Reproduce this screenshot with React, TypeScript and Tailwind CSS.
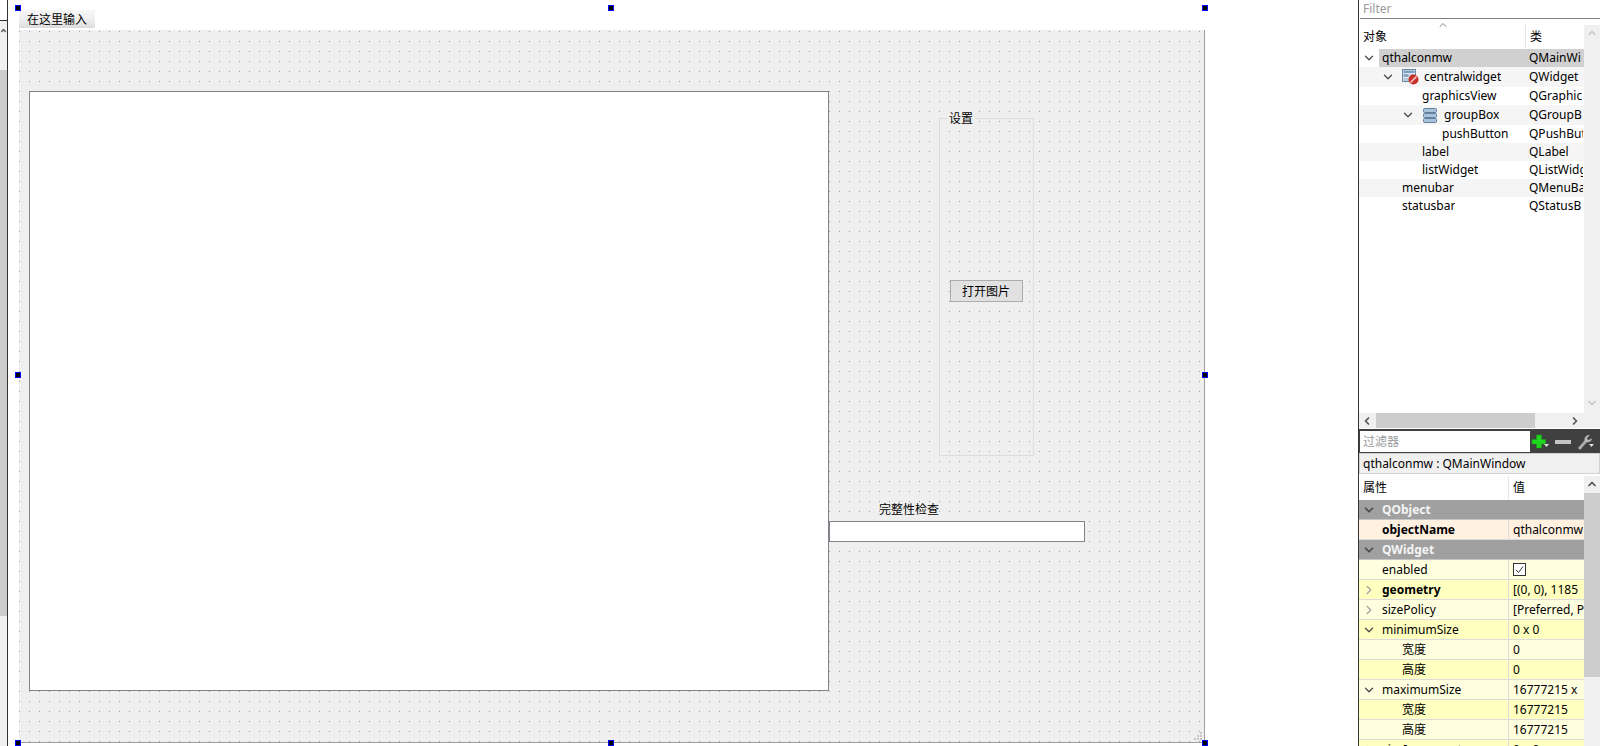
import { ChevronDown, ChevronLeft, ChevronRight, ChevronUp } from "lucide-react";

const cjk = "font-['Noto_Sans','Noto_Sans_CJK_SC',sans-serif]";

const treeRows = [
  { name: "qthalconmw", cls: "QMainWi", indent: 23, arrow: true, icon: "", h: "h-[18px]", bg: "bg-white", selected: true },
  { name: "centralwidget", cls: "QWidget", indent: 65, arrow: true, icon: "widget", h: "h-[20px]", bg: "bg-[#f5f5f5]" },
  { name: "graphicsView", cls: "QGraphic", indent: 63, arrow: false, icon: "", h: "h-[18px]", bg: "bg-white" },
  { name: "groupBox", cls: "QGroupB", indent: 85, arrow: true, icon: "group", h: "h-[20px]", bg: "bg-[#f5f5f5]" },
  { name: "pushButton", cls: "QPushBut", indent: 83, arrow: false, icon: "", h: "h-[18px]", bg: "bg-white" },
  { name: "label", cls: "QLabel", indent: 63, arrow: false, icon: "", h: "h-[18px]", bg: "bg-[#f5f5f5]" },
  { name: "listWidget", cls: "QListWidg", indent: 63, arrow: false, icon: "", h: "h-[18px]", bg: "bg-white" },
  { name: "menubar", cls: "QMenuBa", indent: 43, arrow: false, icon: "", h: "h-[18px]", bg: "bg-[#f5f5f5]" },
  { name: "statusbar", cls: "QStatusB", indent: 43, arrow: false, icon: "", h: "h-[18px]", bg: "bg-white" },
];

const L = "bg-[#ffffdf]";
const D = "bg-[#ffffbf]";

const propRows = [
  { kind: "section", name: "QObject" },
  { name: "objectName", value: "qthalconmw", bold: true, bg: "bg-[#fff0e0]", indent: 23 },
  { kind: "section", name: "QWidget" },
  { name: "enabled", check: true, value: "", bg: L, indent: 23 },
  { name: "geometry", value: "[(0, 0), 1185", bold: true, arrow: "right", bg: D, indent: 23 },
  { name: "sizePolicy", value: "[Preferred, P", arrow: "right", bg: L, indent: 23 },
  { name: "minimumSize", value: "0 x 0", arrow: "down", bg: D, indent: 23 },
  { name: "宽度", value: "0", bg: L, indent: 43 },
  { name: "高度", value: "0", bg: D, indent: 43 },
  { name: "maximumSize", value: "16777215 x", arrow: "down", bg: L, indent: 23 },
  { name: "宽度", value: "16777215", bg: D, indent: 43 },
  { name: "高度", value: "16777215", bg: L, indent: 43 },
  { name: "sizeIncrement", value: "0 x 0", arrow: "right", bg: D, indent: 23 },
];

function Handle({ className }: { className: string }) {
  return <div className={`absolute w-[4px] h-[4px] bg-black border border-[#0000ff] box-content ${className}`} />;
}

function WidgetIcon() {
  return (
    <svg width="17" height="16" viewBox="0 0 17 16" className="shrink-0">
      <rect x="0.5" y="0.5" width="13" height="12" fill="#dfe7ef" stroke="#6f8aa6" />
      <rect x="1.5" y="1.5" width="11" height="2.5" fill="#7f9fc0" />
      <rect x="1.5" y="5" width="5" height="3" fill="#8aa7c4" />
      <rect x="7.5" y="5" width="5" height="3" fill="#b6c8da" />
      <rect x="1.5" y="9" width="5" height="3" fill="#b6c8da" />
      <circle cx="11.5" cy="10.5" r="5" fill="#c8322b" />
      <path d="M8.5 13.5 L14.5 7.5" stroke="#f3d6d4" strokeWidth="1.4" />
    </svg>
  );
}

function GroupIcon() {
  return (
    <svg width="14" height="15" viewBox="0 0 14 15" className="shrink-0">
      <rect x="0.5" y="0.5" width="13" height="4" rx="1" fill="#a9c2dc" stroke="#64809e" />
      <rect x="0.5" y="5.5" width="13" height="4" rx="1" fill="#a9c2dc" stroke="#64809e" />
      <rect x="0.5" y="10.5" width="13" height="4" rx="1" fill="#a9c2dc" stroke="#64809e" />
    </svg>
  );
}

function FormArea() {
  return (
    <div className="relative w-[1186px] ml-[11px] mt-[10px]">
      <div className="h-[18px] w-[76px] flex items-center pl-[8px] pt-[1px] text-[12px] text-black bg-gradient-to-b from-[#f6f6f6] via-[#efefef] to-[#dcdcdc]">
        在这里输入
      </div>
      <div className="mt-[2px] h-[713px] border-b border-r border-[#a0a0a0] bg-[#efefef] bg-[conic-gradient(at_1px_1px,transparent_75%,#a0a0a0_0)] bg-[size:10px_10px] bg-[position:0_1px] relative">
        <div className="absolute left-[10px] top-[61px] w-[800px] h-[600px] bg-white border border-[#82838a]" />
        <div className="absolute left-[920px] top-[88px] w-[95px] h-[338px] border border-[#dcdcdc]">
          <span className="absolute left-[7px] top-[-8px] px-[2px] bg-[#efefef] leading-[16px]">设置</span>
          <div className="absolute left-[10px] top-[161px] w-[73px] h-[22px] bg-[#e1e1e1] border border-[#adadad] flex items-center justify-center pt-[2px] pr-[1px]">
            打开图片
          </div>
        </div>
        <div className="absolute left-[860px] top-[472px] leading-[16px]">完整性检查</div>
        <div className="absolute left-[810px] top-[491px] w-[256px] h-[21px] bg-white border border-[#82838a]" />
        <div className="absolute right-[2px] bottom-[2px] w-[8px] h-[8px] grid grid-cols-3 gap-px">
          <i /><i /><i className="bg-[#c8c8c8] h-[2px]" />
          <i /><i className="bg-[#c8c8c8] h-[2px]" /><i className="bg-[#c8c8c8] h-[2px]" />
          <i className="bg-[#c8c8c8] h-[2px]" /><i className="bg-[#c8c8c8] h-[2px]" /><i className="bg-[#c8c8c8] h-[2px]" />
        </div>
      </div>
      <Handle className="left-[-4px] top-[-5px]" />
      <Handle className="left-[589px] top-[-5px]" />
      <Handle className="right-[-3px] top-[-5px]" />
      <Handle className="left-[-4px] top-[362px]" />
      <Handle className="right-[-3px] top-[362px]" />
      <Handle className="left-[-4px] top-[730px]" />
      <Handle className="left-[589px] top-[730px]" />
      <Handle className="right-[-3px] top-[730px]" />
    </div>
  );
}

function ObjectTree() {
  return (
    <div className="h-[409px] flex bg-white relative">
      <div className="w-[225px] overflow-hidden">
        <div className="h-[24px] mt-[6px] flex relative">
          <ChevronUp size={12} className="absolute left-[78px] top-[-6px] text-[#808080]" />
          <div className="w-[167px] pl-[4px] border-r border-[#e5e5e5] leading-[24px]">对象</div>
          <div className="pl-[4px] leading-[24px]">类</div>
        </div>
        {treeRows.map((row) => (
          <div key={row.name} className={`flex items-center relative ${row.h} ${row.bg}`}>
            {row.selected && <div className="absolute left-[20px] right-0 inset-y-0 bg-[#d0d0d0]" />}
            {row.arrow && (
              <ChevronDown
                size={14}
                strokeWidth={2.5}
                className="absolute text-[#555]"
                style={{ left: row.icon === "group" ? 42 : row.icon === "widget" ? 22 : 3 }}
              />
            )}
            {row.icon === "widget" && <div className="absolute left-[43px]"><WidgetIcon /></div>}
            {row.icon === "group" && <div className="absolute left-[64px]"><GroupIcon /></div>}
            <span className="absolute truncate" style={{ left: row.indent }}>{row.name}</span>
            <span className="absolute left-[170px] w-[54px] overflow-hidden whitespace-nowrap">{row.cls}</span>
          </div>
        ))}
      </div>
      <div className="w-[16px] bg-[#f0f0f0] mt-[6px] flex flex-col justify-between items-center pt-[2px] pb-[19px] text-[#c8c8c8]">
        <ChevronUp size={12} strokeWidth={3.5} />
        <ChevronDown size={12} strokeWidth={3.5} />
      </div>
      <div className="absolute left-0 w-[225px] bottom-0 h-[15px] bg-[#f0f0f0] flex items-center text-[#555]">
        <ChevronLeft size={12} strokeWidth={3.5} className="ml-[2px] shrink-0" />
        <div className="ml-[3px] w-[159px] h-full bg-[#cdcdcd]" />
        <ChevronRight size={12} strokeWidth={3.5} className="ml-[34px] shrink-0" />
      </div>
    </div>
  );
}

function FilterBar() {
  return (
    <div className="h-[24px] bg-[#404040] flex items-center relative">
      <div className="ml-[1px] w-[170px] h-[21px] bg-white text-[#9a9a9a] leading-[21px] pl-[3px]">过滤器</div>
      <svg width="70" height="24" viewBox="0 0 70 24" className="shrink-0">
        <path d="M6.5 6h5v4.5h4v4.5h-4v4h-5v-4H2v-4.5h4.5z" fill="#1fd51f" stroke="#17a017" strokeWidth="0.5" />
        <path d="M14 15h5l-2.5 3z" fill="#e0e0e0" />
        <rect x="25" y="11" width="16" height="4" fill="#c4c4c4" />
        <path d="M49 20 L56 12" stroke="#a8a8a8" strokeWidth="3" />
        <path d="M55 13 q-2 -5 3 -7 l2 0 l-3 3 l1 2 l3 -1 l1 -1 q0 5 -7 4z" fill="#b5b5b5" />
        <path d="M59 15h5l-2.5 3z" fill="#e0e0e0" />
      </svg>
    </div>
  );
}

function PropertyEditor() {
  return (
    <div className="flex h-[272px] overflow-hidden">
      <div className="w-[225px]">
        <div className="h-[24px] flex bg-white leading-[24px] mt-[2px]">
          <div className="w-[150px] pl-[4px] border-r border-[#e5e5e5]">属性</div>
          <div className="pl-[4px]">值</div>
        </div>
        {propRows.map((row, i) =>
          row.kind === "section" ? (
            <div key={i} className="h-[20px] bg-[#a0a0a0] border-b border-[#c4c4c4] flex items-center relative text-[#f4f4f4] font-bold">
              <ChevronDown size={14} strokeWidth={3} className="absolute left-[3px] text-[#4a4a4a]" />
              <span className="absolute left-[23px]">{row.name}</span>
            </div>
          ) : (
            <div key={i} className={`h-[20px] border-b border-[#dcdcdc] flex items-center relative ${row.bg}`}>
              {row.arrow === "down" && <ChevronDown size={14} strokeWidth={2.5} className="absolute left-[3px] text-[#555]" />}
              {row.arrow === "right" && <ChevronRight size={14} strokeWidth={2.5} className="absolute left-[3px] text-[#a8a8a8]" />}
              <span className={`absolute ${row.bold ? "font-bold" : ""}`} style={{ left: row.indent }}>{row.name}</span>
              <div className="absolute left-[149px] inset-y-0 w-px bg-[#dcdcdc]" />
              {row.check ? (
                <div className="absolute left-[154px] w-[13px] h-[13px] border border-[#333] bg-white">
                  <svg viewBox="0 0 11 11" className="w-full h-full"><path d="M2 6l2.5 2.5L9 2.5" fill="none" stroke="#333" strokeWidth="1" /></svg>
                </div>
              ) : (
                <span className="absolute left-[154px] w-[71px] overflow-hidden whitespace-nowrap">{row.value}</span>
              )}
            </div>
          )
        )}
      </div>
      <div className="w-[16px] bg-[#f0f0f0] mt-[2px] flex flex-col items-center">
        <ChevronUp size={12} strokeWidth={3.5} className="text-[#555] mt-[2px]" />
        <div className="w-full h-[184px] mt-[3px] bg-[#cdcdcd]" />
      </div>
    </div>
  );
}

export default function App() {
  return (
    <div className={`w-[1600px] h-[746px] bg-white flex overflow-hidden text-[12px] text-black ${cjk}`}>
      <div className="w-[8px] shrink-0 border-r border-[#333] flex flex-col">
        <div className="h-[21px] bg-white border-b border-[#333]" />
        <div className="h-[49px] bg-[#f0f0f0] flex justify-center pt-[6px]">
          <ChevronUp size={7} strokeWidth={5} className="text-[#606060]" />
        </div>
        <div className="h-[546px] bg-[#cdcdcd]" />
        <div className="flex-1 bg-[#f0f0f0]" />
      </div>
      <div className="flex-1"><FormArea /></div>
      <div className="w-[242px] shrink-0 border-l border-[#333] flex flex-col">
        <div className="h-[19px] bg-white border-b border-[#808080] text-[#9a9a9a] pl-[3px] leading-[18px] ml-[1px]">Filter</div>
        <ObjectTree />
        <div className="mt-[1px]"><FilterBar /></div>
        <div className="h-[21px] bg-[#f0f0f0] border border-[#d0d0d0] leading-[19px] pl-[3px]">qthalconmw : QMainWindow</div>
        <PropertyEditor />
      </div>
    </div>
  );
}
